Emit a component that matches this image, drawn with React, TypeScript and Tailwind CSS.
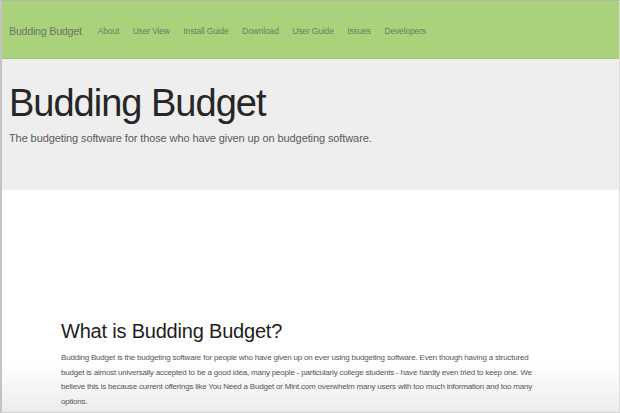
export default function App() {
  const links = ["About", "User View", "Install Guide", "Download", "User Guide", "Issues", "Developers"];
  return (
    <div className="w-[620px] h-[413px] overflow-hidden bg-white border-t border-t-[#b4b4b4] border-l-2 border-l-[#c4c4c4] border-r border-r-[#dcdcdc] border-b border-b-[#d0d0d0] flex flex-col" style={{ fontFamily: '"Liberation Sans", Arial, sans-serif' }}>
      <nav className="h-[58px] shrink-0 bg-[#a9d27a] flex items-center pl-[7px] pt-[3px] border-b border-b-[#9fc872]">
        <span className="text-[10.8px] text-[#6f7468] mr-[16px] tracking-[-0.3px]">Budding Budget</span>
        <div className="flex gap-[13.5px] text-[8.5px] text-[#707a68] tracking-[-0.15px]">
          {links.map((l) => (
            <span key={l}>{l}</span>
          ))}
        </div>
      </nav>
      <header className="h-[131px] shrink-0 bg-[#eeeeee] pl-[7px] pt-[21px]">
        <h1 className="text-[38px] leading-[46px] text-[#262626] tracking-[-1px]">Budding Budget</h1>
        <p className="text-[11px] text-[#5a5a5a] mt-[4px] tracking-[-0.1px]">The budgeting software for those who have given up on budgeting software.</p>
      </header>
      <main className="flex-1 bg-gradient-to-b from-white from-[78%] to-[#ececec] pl-[59px] pt-[129px]">
        <h2 className="text-[20px] leading-[24px] text-[#1d1d1d] tracking-[-0.2px]">What is Budding Budget?</h2>
        <p className="w-[487px] mt-[8px] text-[8px] leading-[14.5px] text-[#555555] tracking-[-0.2px]">
          Budding Budget is the budgeting software for people who have given up on ever using budgeting software. Even though having a structured budget is almost universally accepted to be a good idea, many people - particularly college students - have hardly even tried to keep one. We believe this is because current offerings like You Need a Budget or Mint.com overwhelm many users with too much information and too many options.
        </p>
      </main>
    </div>
  );
}
